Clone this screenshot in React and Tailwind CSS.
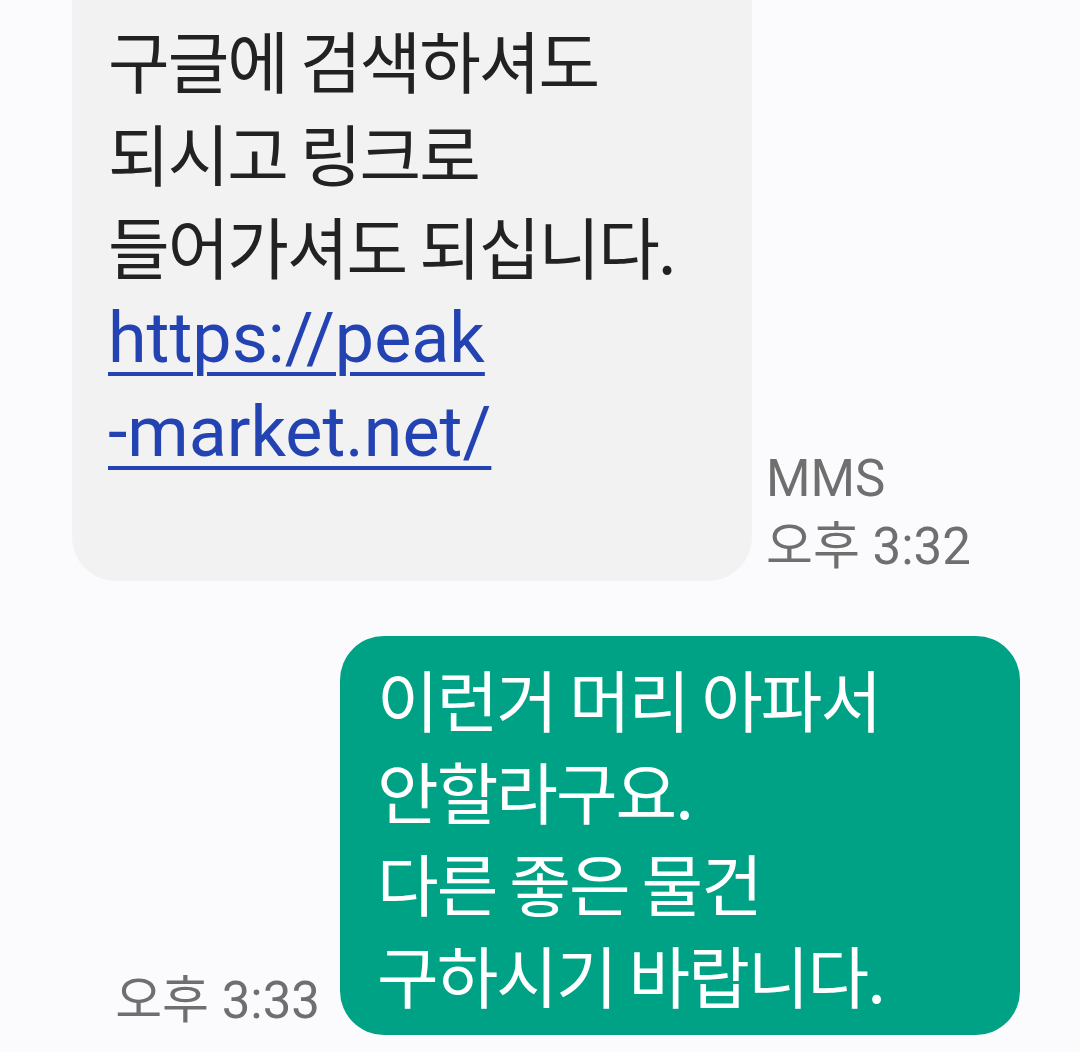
import React from 'react';

const kr = { fontFamily: '"Noto Sans CJK KR", "Noto Sans", sans-serif' };
const latin = { fontFamily: 'Roboto, "Noto Sans CJK KR", sans-serif' };

const Received = () => (
    <div className="flex items-end pl-[72px] gap-[14px]">
        <div className="w-[680px] bg-[#f2f2f2] rounded-b-[44px] pl-[36px] pt-[12px] pb-[102px]">
            <p className="text-[67px] leading-[93px] text-[#222222] whitespace-nowrap tracking-[-2px]" style={kr}>
                구글에 검색하셔도
                <br />
                되시고 링크로
                <br />
                들어가셔도 되십니다.
            </p>
            <a
                href="#"
                className="block text-[70px] leading-[94px] text-[#2443b3] underline decoration-[4px] underline-offset-[10px] whitespace-nowrap"
                style={latin}
            >
                https://peak
                <br />
                -market.net/
            </a>
        </div>
        <div className="flex flex-col text-[51px] leading-[68px] text-[#6f6f6f]" style={latin}>
            <span>MMS</span>
            <span>오후 3:32</span>
        </div>
    </div>
);

const Sent = () => (
    <div className="flex items-end justify-end pr-[60px] gap-[20px] mt-[55px]">
        <span className="text-[51px] leading-[68px] text-[#6f6f6f]" style={latin}>
            오후 3:33
        </span>
        <div className="w-[680px] bg-[#00a286] rounded-[44px] pl-[37px] pt-[16px] pb-[15px]">
            <p className="text-[67px] leading-[92px] text-white whitespace-nowrap tracking-[-2px]" style={kr}>
                이런거 머리 아파서
                <br />
                안할라구요.
                <br />
                다른 좋은 물건
                <br />
                구하시기 바랍니다.
            </p>
        </div>
    </div>
);

export default function App() {
    return (
        <div className="w-[1080px] h-[1052px] bg-[#fbfbfd] overflow-hidden">
            <Received />
            <Sent />
        </div>
    );
}
